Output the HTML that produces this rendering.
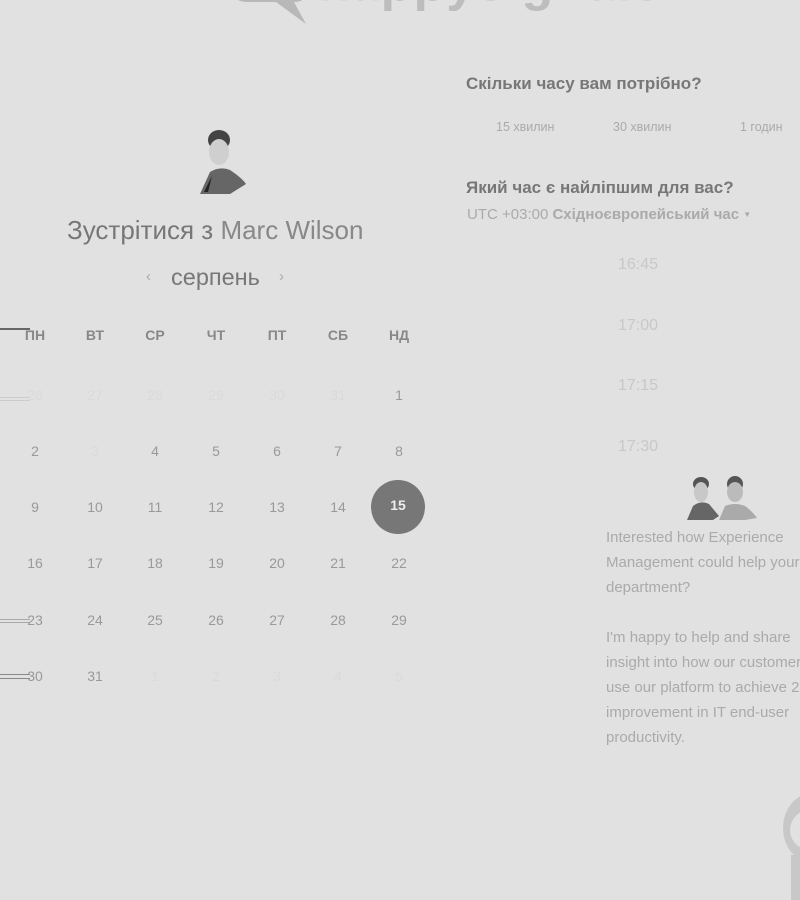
<!DOCTYPE html>
<html><head><meta charset="utf-8"><style>
html,body{margin:0;padding:0;width:800px;height:900px;overflow:hidden;background:#e1e1e1;font-family:"Liberation Sans",sans-serif;}
.a{position:absolute;white-space:nowrap;}
.c{position:absolute;width:60px;text-align:center;font-size:14px;color:#999;}
.h{font-weight:bold;color:#888;font-size:14px;}
.f{color:#dadada;}
</style></head><body>
<svg class="a" style="left:228px;top:-20px" width="80" height="46"><path d="M8 0 H74 Q78 0 78 8 V12 Q78 22 66 22 L78 44 L48 22 H20 Q6 22 4 12 Z" fill="#b8b8b8"/></svg>
<div class="a" style="left:318px;top:-47px;font-size:52px;font-weight:bold;color:#bdbdbd;letter-spacing:1px">happysignals</div>

<svg class="a" style="left:196px;top:128px" width="52" height="68"><ellipse cx="23" cy="12" rx="11" ry="10" fill="#444"/><ellipse cx="23" cy="24" rx="10" ry="13" fill="#cfcfcf"/><path d="M4 66 L14 44 Q24 38 34 42 Q46 50 50 56 L34 66 Z" fill="#666"/><path d="M16 48 L8 64 L12 64 Z" fill="#222"/></svg>
<div class="a" style="left:67px;top:215px;font-size:26px;color:#777">Зустрітися з <span style="color:#888">Marc Wilson</span></div>
<div class="a" style="left:146px;top:268px;font-size:15px;color:#aaa">‹</div>
<div class="a" style="left:171px;top:264px;font-size:23.5px;color:#777">серпень</div>
<div class="a" style="left:279px;top:268px;font-size:15px;color:#aaa">›</div>

<div style="position:absolute;left:0;top:328px;width:30px;height:2px;background:#666"></div>
<div style="position:absolute;left:0;top:397px;width:30px;height:2px;border-top:1px solid #ccc;border-bottom:1px solid #ccc"></div>
<div style="position:absolute;left:0;top:619px;width:30px;height:2px;border-top:1px solid #aaa;border-bottom:1px solid #aaa"></div>
<div style="position:absolute;left:0;top:674px;width:30px;height:3px;border-top:1px solid #888;border-bottom:1px solid #888"></div>

<div class="c h" style="left:5px;top:327px">ПН</div><div class="c h" style="left:65px;top:327px">ВТ</div><div class="c h" style="left:125px;top:327px">СР</div><div class="c h" style="left:186px;top:327px">ЧТ</div><div class="c h" style="left:247px;top:327px">ПТ</div><div class="c h" style="left:308px;top:327px">СБ</div><div class="c h" style="left:369px;top:327px">НД</div>

<div class="c f" style="left:5px;top:387px">26</div><div class="c f" style="left:65px;top:387px">27</div><div class="c f" style="left:125px;top:387px">28</div><div class="c f" style="left:186px;top:387px">29</div><div class="c f" style="left:247px;top:387px">30</div><div class="c f" style="left:308px;top:387px">31</div><div class="c" style="left:369px;top:387px">1</div>
<div class="c" style="left:5px;top:443px">2</div><div class="c f" style="left:65px;top:443px">3</div><div class="c" style="left:125px;top:443px">4</div><div class="c" style="left:186px;top:443px">5</div><div class="c" style="left:247px;top:443px">6</div><div class="c" style="left:308px;top:443px">7</div><div class="c" style="left:369px;top:443px">8</div>
<div class="c" style="left:5px;top:499px">9</div><div class="c" style="left:65px;top:499px">10</div><div class="c" style="left:125px;top:499px">11</div><div class="c" style="left:186px;top:499px">12</div><div class="c" style="left:247px;top:499px">13</div><div class="c" style="left:308px;top:499px">14</div>
<div style="position:absolute;left:371px;top:480px;width:54px;height:54px;border-radius:50%;background:#777"></div>
<div class="c" style="left:368px;top:497px;color:#eee;font-weight:bold">15</div>
<div class="c" style="left:5px;top:555px">16</div><div class="c" style="left:65px;top:555px">17</div><div class="c" style="left:125px;top:555px">18</div><div class="c" style="left:186px;top:555px">19</div><div class="c" style="left:247px;top:555px">20</div><div class="c" style="left:308px;top:555px">21</div><div class="c" style="left:369px;top:555px">22</div>
<div class="c" style="left:5px;top:612px">23</div><div class="c" style="left:65px;top:612px">24</div><div class="c" style="left:125px;top:612px">25</div><div class="c" style="left:186px;top:612px">26</div><div class="c" style="left:247px;top:612px">27</div><div class="c" style="left:308px;top:612px">28</div><div class="c" style="left:369px;top:612px">29</div>
<div class="c" style="left:5px;top:668px">30</div><div class="c" style="left:65px;top:668px">31</div><div class="c f" style="left:125px;top:668px">1</div><div class="c f" style="left:186px;top:668px">2</div><div class="c f" style="left:247px;top:668px">3</div><div class="c f" style="left:308px;top:668px">4</div><div class="c f" style="left:369px;top:668px">5</div>

<div class="a" style="left:466px;top:74px;font-size:17px;font-weight:bold;color:#777">Скільки часу вам потрібно?</div>
<div class="a" style="left:496px;top:120px;font-size:12.5px;color:#aaa">15 хвилин</div>
<div class="a" style="left:613px;top:120px;font-size:12.5px;color:#aaa">30 хвилин</div>
<div class="a" style="left:740px;top:120px;font-size:12.5px;color:#aaa">1 годин</div>
<div class="a" style="left:466px;top:178px;font-size:17px;font-weight:bold;color:#777">Який час є найліпшим для вас?</div>
<div class="a" style="left:467px;top:206px;font-size:15px;color:#aaa">UTC +03:00 <b>Східноєвропейський час</b> <span style="font-size:8px;position:relative;top:-2px">▼</span></div>
<div class="a" style="left:618px;top:256px;font-size:16px;color:#c8c8c8">16:45</div>
<div class="a" style="left:618px;top:317px;font-size:16px;color:#c8c8c8">17:00</div>
<div class="a" style="left:618px;top:377px;font-size:16px;color:#c8c8c8">17:15</div>
<div class="a" style="left:618px;top:438px;font-size:16px;color:#c8c8c8">17:30</div>

<svg class="a" style="left:685px;top:474px" width="75" height="46"><ellipse cx="16" cy="10" rx="8" ry="7" fill="#555"/><ellipse cx="16" cy="18" rx="7" ry="10" fill="#c8c8c8"/><path d="M2 46 L8 32 Q16 26 24 30 L34 42 L28 46 Z" fill="#666"/><ellipse cx="50" cy="10" rx="8" ry="8" fill="#555"/><ellipse cx="50" cy="18" rx="8" ry="10" fill="#bbb"/><path d="M34 46 L40 32 Q50 28 60 32 Q68 38 72 44 L60 46 Z" fill="#aaa"/></svg>
<div class="a" style="left:606px;top:525px;font-size:15px;line-height:25px;color:#aaa">Interested how Experience<br>Management could help your<br>department?<br><br>I'm happy to help and share<br>insight into how our customers<br>use our platform to achieve 25%<br>improvement in IT end-user<br>productivity.</div>

<div style="position:absolute;left:783px;top:793px;width:60px;height:70px;border-radius:50%;background:#c8c8c8"></div>
<div style="position:absolute;left:790px;top:810px;width:40px;height:40px;border-radius:50%;background:#e1e1e1"></div>
<div style="position:absolute;left:791px;top:855px;width:10px;height:45px;background:#c8c8c8"></div>
</body></html>
